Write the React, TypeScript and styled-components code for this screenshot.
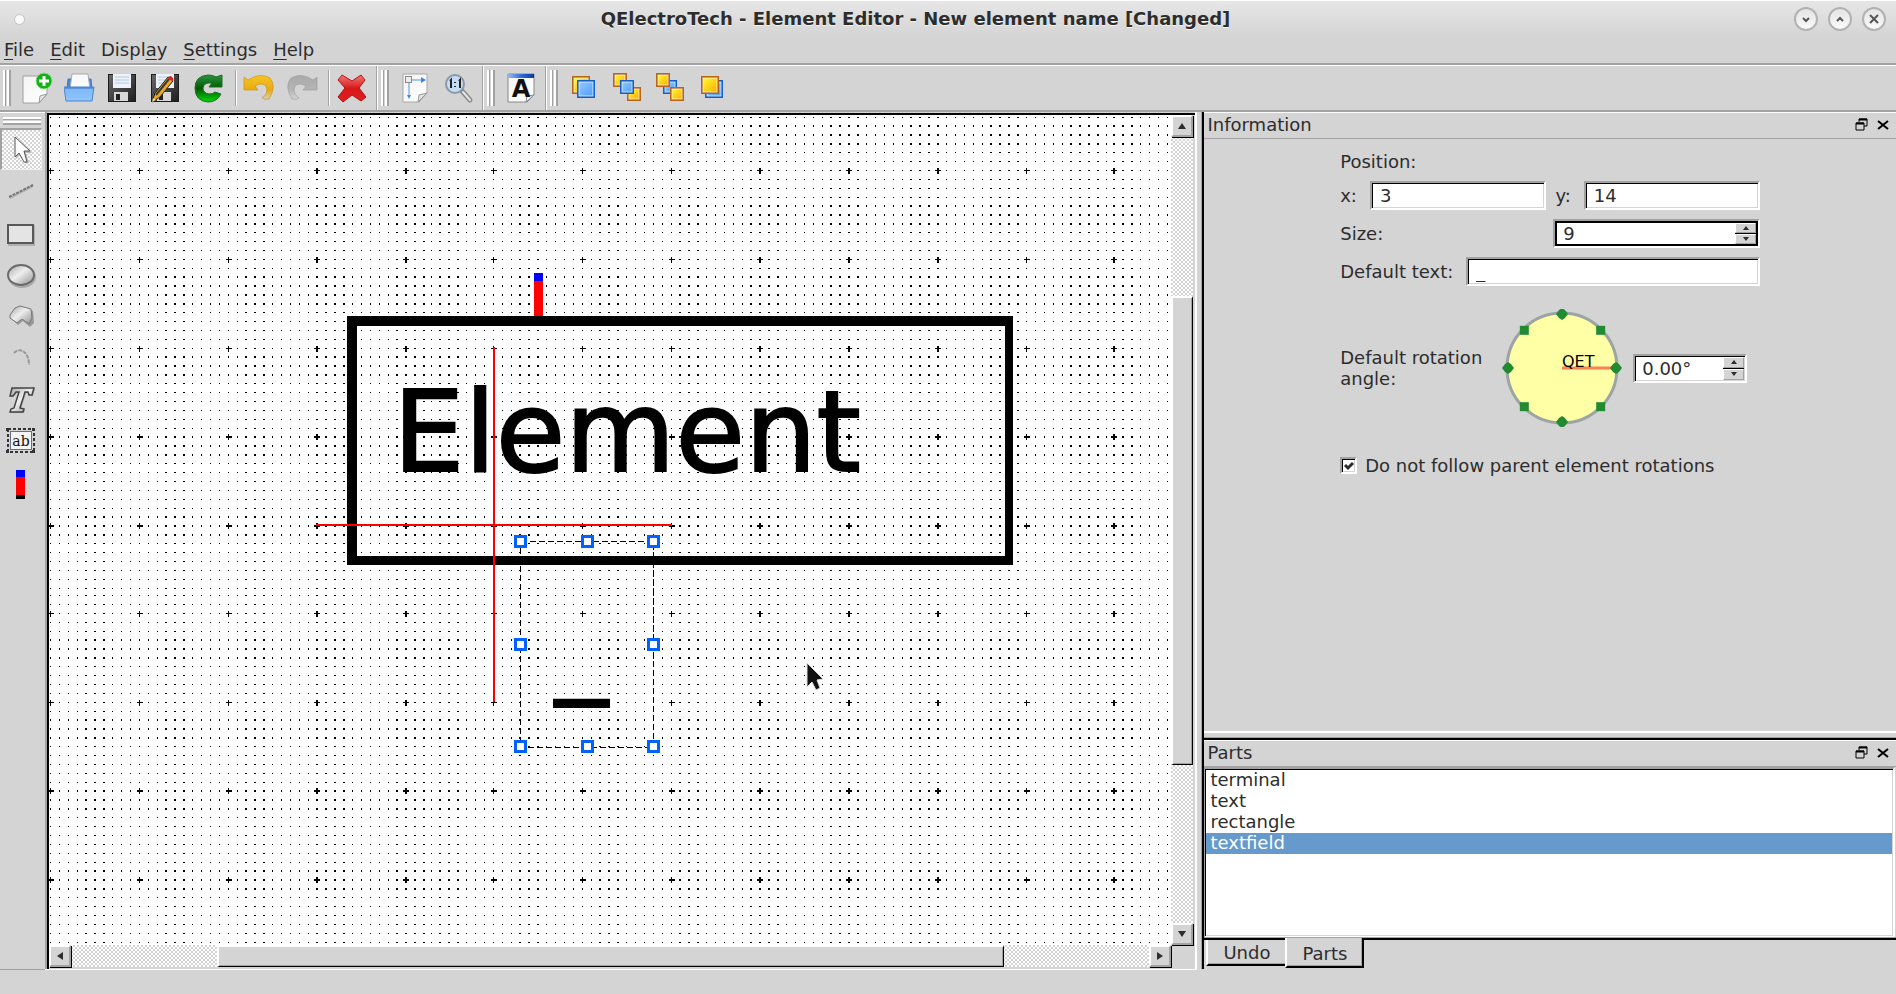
import React from "react";
import styled, { createGlobalStyle, css } from "styled-components";

const FACE = "#d4d4d4";
const SHADE = "#a2a2a2";
const INK = "#2d2d2d";

const GlobalStyle = createGlobalStyle`
  * { box-sizing: border-box; }
  body { margin: 0; background: ${FACE}; }
  button, input { font: inherit; color: inherit; }
`;

const raised = css`
  border-style: solid;
  border-width: 2px;
  border-color: #fff ${SHADE} ${SHADE} #fff;
`;

const stipple = css`
  background: repeating-conic-gradient(#fff 0 25%, ${FACE} 0 50%) 0 0 / 4px 4px;
`;

const Window = styled.div`
  display: flex;
  flex-direction: column;
  height: 100vh;
  min-height: 700px;
  overflow: hidden;
  background: ${FACE};
  color: ${INK};
  font: 18px/21px "DejaVu Sans", sans-serif;
`;

const TitleBar = styled.header`
  display: flex;
  align-items: center;
  height: 37px;
  padding: 0 10px 0 14px;
  border-top: 1px solid #fff;
  background: linear-gradient(#e6e6e6, ${FACE});
`;

const TitleButtons = styled.div`
  flex: none;
  display: flex;
  gap: 10px;
`;

const StickyDot = styled.button`
  width: 11px;
  height: 11px;
  padding: 0;
  border: 1px solid #c2c2c2;
  border-radius: 50%;
  background: #fafafa;
`;

const Title = styled.h1`
  flex: 1;
  margin: 0;
  padding-left: 12px;
  text-align: center;
  font-size: 18px;
  line-height: 24px;
  font-weight: bold;
  white-space: nowrap;
  text-shadow: 0 1px 0 #f4f4f4;
`;

const WindowButton = styled.button`
  display: flex;
  align-items: center;
  justify-content: center;
  width: 24px;
  height: 24px;
  padding: 0;
  border: 2px solid #b2b2b2;
  border-radius: 50%;
  background: linear-gradient(#e4e4e4, #fafafa);
`;

const MenuBar = styled.nav`
  display: flex;
  align-items: flex-start;
  gap: 16px;
  height: 28px;
  padding: 2px 4px 0;
  border-bottom: 2px solid ${SHADE};
`;

const MenuItem = styled.button`
  padding: 0;
  border: 0;
  background: none;
  line-height: 21px;
  u {
    text-decoration-thickness: 1px;
    text-underline-offset: 3px;
  }
`;

const ToolRow = styled.div`
  display: flex;
  height: 47px;
  border-top: 1px solid #fff;
  border-bottom: 2px solid ${SHADE};
`;

const ToolGroup = styled.div<{ $last?: boolean }>`
  display: flex;
  align-items: center;
  gap: 4px;
  padding: 0 3px;
  ${(p) =>
    !p.$last &&
    css`
      border-right: 1px solid ${SHADE};
      box-shadow: 1px 0 0 #fff;
      margin-right: 1px;
    `}
`;

const Grip = styled.span<{ $flat?: boolean }>`
  flex: none;
  width: ${(p) => (p.$flat ? "38px" : "8px")};
  height: ${(p) => (p.$flat ? "8px" : "36px")};
  background: linear-gradient(
    ${(p) => (p.$flat ? "180deg" : "90deg")},
    #fff 0 2px, ${SHADE} 2px 3px, ${FACE} 3px 4px, #fff 4px 6px, ${SHADE} 6px 8px
  );
`;

const Tools = styled.div`
  display: flex;
  align-items: center;
`;

const ToolButton = styled.button`
  display: flex;
  align-items: center;
  justify-content: center;
  width: 43px;
  height: 42px;
  padding: 0;
  border: 0;
  background: none;
  svg { display: block; }
`;

const Separator = styled.span`
  width: 2px;
  height: 36px;
  margin: 0 0 0 5px;
  border-left: 1px solid ${SHADE};
  border-right: 1px solid #fff;
`;

const Workspace = styled.main`
  flex: 1;
  display: flex;
  min-height: 0;
`;

const PartTools = styled.div`
  flex: none;
  display: flex;
  flex-direction: column;
  width: 45px;
  padding-top: 4px;
  border-top: 1px solid #fff;
  border-bottom: 1px solid ${SHADE};
  ${Grip} { margin: 0 3px 3px; }
`;

const PartButton = styled(ToolButton)<{ $on?: boolean }>`
  width: 42px;
  ${(p) =>
    p.$on &&
    css`
      ${stipple}
      border: 2px solid;
      border-width: 2px 1px 1px 2px;
      border-color: ${SHADE} #eee #eee ${SHADE};
    `}
`;

const CanvasFrame = styled.section`
  flex: 1;
  display: grid;
  grid-template-columns: minmax(0, 1fr) 22px;
  grid-template-rows: minmax(0, 1fr) 22px;
  min-width: 0;
  padding: 3px 2px 2px 4px;
  border-right: 2px solid #fff;
  border-bottom: 1px solid #fff;
  box-shadow: inset 2px 0 0 ${SHADE}, inset 0 1px 0 ${FACE}, inset 4px 3px 0 #000;
`;

const Scene = styled.svg`
  display: block;
  width: 100%;
  height: 100%;
  background: #fff;
`;

const ScrollBar = styled.div<{ $vertical?: boolean }>`
  display: flex;
  flex-direction: ${(p) => (p.$vertical ? "column" : "row")};
  ${stipple}
`;

const ScrollArrow = styled.button`
  flex: none;
  display: flex;
  align-items: center;
  justify-content: center;
  width: 22px;
  height: 22px;
  padding: 0;
  ${raised}
  background: ${FACE};
  box-shadow: 1px 1px 0 #000;
`;

const Track = styled.span<{ $grow: number }>`
  flex: ${(p) => p.$grow} 1 0;
`;

const Thumb = styled.span<{ $grow: number }>`
  flex: ${(p) => p.$grow} 1 0;
  border: solid;
  border-width: 2px 1px 1px 2px;
  border-color: #fff #000 #000 #fff;
  background: ${FACE};
  box-shadow: inset -1px -1px 0 ${SHADE};
`;

const Docks = styled.aside`
  flex: 0 0 calc(36% + 16px);
  display: flex;
  flex-direction: column;
  min-width: 480px;
  margin-bottom: 1px;
  padding-left: 5px;
`;

const DockArea = styled.div`
  flex: 1;
  display: flex;
  flex-direction: column;
  min-height: 0;
  border-left: 2px solid #000;
  box-shadow: -1px 0 0 ${SHADE};
`;

const DockTitle = styled.header`
  flex: none;
  display: flex;
  align-items: center;
  gap: 9px;
  height: 27px;
  padding: 0 7px 2px 3px;
  border-top: 1px solid #fff;
  border-bottom: 1px solid ${SHADE};
`;

const DockName = styled.h2`
  flex: 1;
  margin: 0;
  font-size: 18px;
  font-weight: normal;
`;

const DockButton = styled.button`
  display: flex;
  padding: 0;
  border: 0;
  background: none;
`;

const InfoBody = styled.form`
  flex: 1;
  display: flex;
  flex-direction: column;
  gap: 9px;
  width: 100%;
  max-width: 420px;
  min-height: 0;
  margin: 0 auto;
  padding-top: 12px;
`;

const FormHeading = styled.h3`
  margin: 0;
  font-size: 18px;
  font-weight: normal;
  line-height: 21px;
`;

const FormRow = styled.div<{ $tall?: boolean }>`
  display: flex;
  align-items: center;
  justify-content: space-between;
  gap: 9px;
  min-height: 29px;
  ${(p) => p.$tall && css`padding: 14px 13px 14px 0;`}
`;

const Label = styled.label`
  flex: none;
`;

const RotationLabel = styled(Label)`
  width: 150px;
`;

const sunken = css`
  border-style: solid;
  border-width: 2px;
  border-color: ${SHADE} #fff #fff ${SHADE};
  background: #fff;
  box-shadow: inset 1px 1px 0 #000, inset -1px -1px 0 ${FACE};
`;

const TextBox = styled.input`
  flex: 1;
  min-width: 0;
  height: 29px;
  margin-left: 4px;
  padding: 1px 8px;
  ${sunken}
  outline: 0;
`;

const SpinBox = styled.div<{ $wide?: boolean }>`
  display: flex;
  width: ${(p) => (p.$wide ? "207px" : "114px")};
  height: 29px;
  padding: ${(p) => (p.$wide ? "2px" : "1px")};
  ${sunken}
  ${(p) => p.$wide && css`box-shadow: inset 0 0 0 2px #000;`}
`;

const SpinInput = styled.input`
  flex: 1;
  min-width: 0;
  padding: 0 6px;
  border: 0;
  outline: 0;
  background: #fff;
`;

const SpinButtons = styled.div`
  display: grid;
  grid-template-rows: 1fr 1fr;
  gap: 1px;
  width: 21px;
  background: #000;
`;

const SpinButton = styled.button`
  display: flex;
  align-items: center;
  justify-content: center;
  min-height: 0;
  padding: 0;
  border: 1px solid;
  border-color: #fff ${SHADE} ${SHADE} #fff;
  background: ${FACE};
`;

const CheckRow = styled.label`
  display: flex;
  align-items: center;
  gap: 8px;
  padding-top: 5px;
`;

const CheckBox = styled.input`
  appearance: none;
  width: 17px;
  height: 17px;
  margin: 0;
  ${sunken}
`;

const CheckHolder = styled.span`
  display: grid;
  > * { grid-area: 1 / 1; }
  svg { pointer-events: none; }
  input:not(:checked) + svg { visibility: hidden; }
`;

const Splitter = styled.div`
  flex: none;
  height: 9px;
  border-top: 2px solid #fff;
  border-bottom: 2px solid #000;
  box-shadow: inset 0 -1px 0 ${SHADE};
`;

const PartsDock = styled.section`
  flex: 0 0 198px;
  display: flex;
  flex-direction: column;
`;

const PartsList = styled.ul`
  flex: 1;
  margin: 0 1px 0 0;
  padding: 1px 1px 0;
  list-style: none;
  ${sunken}
  border-left-width: 1px;
`;

const PartRow = styled.li<{ $on?: boolean }>`
  height: 21px;
  padding-left: 4px;
  line-height: 20px;
  background: ${(p) => (p.$on ? "#6699cc" : "transparent")};
  color: ${(p) => (p.$on ? "#fff" : INK)};
`;

const TabBar = styled.div`
  flex: none;
  display: flex;
  align-items: flex-start;
  height: 31px;
  padding-left: 2px;
  border-top: 2px solid #000;
  box-shadow: 0 -1px 0 ${SHADE};
`;

const Tab = styled.button<{ $on?: boolean }>`
  width: 79px;
  height: ${(p) => (p.$on ? "30px" : "26px")};
  margin-top: ${(p) => (p.$on ? "-2px" : "0")};
  padding: ${(p) => (p.$on ? "2px 0 0" : "0")};
  border: 0;
  border-left: 2px solid #fff;
  border-bottom: 2px solid #000;
  border-right: ${(p) => (p.$on ? "2px solid #000" : "0")};
  background: ${FACE};
  box-shadow: inset ${(p) => (p.$on ? "-1px" : "0")} -1px 0 ${SHADE};
`;

const StatusBar = styled.footer`
  height: 24px;
`;

/* ---------- icons ---------- */

const Defs = () => (
  <svg width="0" height="0" aria-hidden="true">
    <defs>
      <linearGradient id="paper" x1="0" y1="0" x2="1" y2="1"><stop stopColor="#f4f4f4" /><stop offset="1" stopColor="#fff" /></linearGradient>
      <linearGradient id="blue" x1="0" y1="0" x2="0" y2="1"><stop stopColor="#7db8f5" /><stop offset="1" stopColor="#8fc4ff" /></linearGradient>
      <linearGradient id="sky" x1="0" y1="0" x2="1" y2="1"><stop stopColor="#9accff" /><stop offset="1" stopColor="#4a9dff" /></linearGradient>
      <linearGradient id="sun" x1="0" y1="0" x2="1" y2="1"><stop stopColor="#ffff30" /><stop offset="1" stopColor="#fba800" /></linearGradient>
      <linearGradient id="disk" x1="0" y1="0" x2="1" y2="1"><stop stopColor="#6a6a6a" /><stop offset="1" stopColor="#1e1e1e" /></linearGradient>
      <linearGradient id="green" x1="0" y1="0" x2="0" y2="1"><stop stopColor="#2c9440" /><stop offset=".5" stopColor="#005a00" /><stop offset="1" stopColor="#0ad80a" /></linearGradient>
      <linearGradient id="gold" x1="0" y1="0" x2="0" y2="1"><stop stopColor="#f5c526" /><stop offset=".6" stopColor="#e8ab10" /><stop offset="1" stopColor="#e8ab10" stopOpacity=".1" /></linearGradient>
      <linearGradient id="silver" x1="0" y1="0" x2="0" y2="1"><stop stopColor="#aaa" /><stop offset=".6" stopColor="#b4b4b4" /><stop offset="1" stopColor="#bbb" stopOpacity=".1" /></linearGradient>
      <linearGradient id="red" x1="0" y1="0" x2="0" y2="1"><stop stopColor="#f07878" /><stop offset=".5" stopColor="#d81818" /><stop offset="1" stopColor="#e02020" /></linearGradient>
      <linearGradient id="steel" x1="0" y1="0" x2="1" y2="1"><stop stopColor="#a8a8a8" /><stop offset=".45" stopColor="#eee" /><stop offset="1" stopColor="#909090" /></linearGradient>
      <linearGradient id="caption" x1="0" y1="0" x2="1" y2="0"><stop stopColor="#9bb8e8" /><stop offset=".5" stopColor="#2f6fdc" /><stop offset="1" stopColor="#0a3a9a" /></linearGradient>
    </defs>
  </svg>
);

type IconProps = { children: React.ReactNode };
const Icon = ({ children }: IconProps) => (
  <svg width="32" height="32" viewBox="0 0 32 32" aria-hidden="true">{children}</svg>
);

const NewIcon = () => (
  <Icon>
    <path d="M2 4H26V22L18 31H2Z" fill="url(#paper)" stroke="#a0a0a0" />
    <path d="M18 31L19 24L26 22Z" fill="#e8e8e8" stroke="#999" />
    <circle cx="23" cy="9" r="8" fill="#12b012" stroke="#8fdc8f" />
    <path d="M23 4V14M18 9H28" stroke="#fff" strokeWidth="3" />
  </Icon>
);
const OpenIcon = () => (
  <Icon>
    <path d="M4 7H27L28 17H3Z" fill="#4b87d6" stroke="#3f78c4" />
    <path d="M8 2H24L26 17H6Z" fill="#fafafa" stroke="#aaa" />
    <path d="M0 15H30L28 29H2Z" fill="url(#blue)" stroke="#4a84cc" />
    <path d="M1 16H29" stroke="#3a73c0" />
  </Icon>
);
const Floppy = () => (
  <>
    <rect x="1.500" y="2.500" width="27" height="27" fill="url(#disk)" stroke="#1c1c1c" />
    <rect x="6" y="2" width="18" height="14" fill="#eef3fa" />
    <path d="M8 5H22M8 8H22M8 11H22" stroke="#b4c8e0" />
    <rect x="7" y="20" width="14" height="9" fill="#d8d8d8" />
    <rect x="9" y="22" width="4" height="6" fill="#222" />
  </>
);
const SaveIcon = () => (<Icon><Floppy /></Icon>);
const SaveAsIcon = () => (
  <Icon>
    <Floppy />
    <path d="M2 30L5 21L18 5L23 9L10 25Z" fill="#e8a820" stroke="#222" />
    <path d="M6 23L19 7" stroke="#3a3a3a" strokeWidth="2" />
    <path d="M17 6L20 4Q24 5 23 9Z" fill="#dd1c1c" />
    <path d="M2 30L3 26L6 28Z" fill="#f2d8a0" />
  </Icon>
);
const ReloadIcon = () => (
  <Icon>
    <path d="M23 5Q20 3 15 3Q2 4 2 16Q2 29 15 30Q24 30 28 22L22 20Q20 22 16 22Q10 21 10 16Q11 11 16 11L19 11L16 15H29V3Z" fill="url(#green)" stroke="#1d6e25" />
  </Icon>
);
const BackShape = "M1 5L5 8Q17 0 27 6Q34 14 26 27Q21 28 19 26Q26 21 23 14Q19 10 12 14L15 18H1Z";
const UndoIcon = () => (<Icon><path d={BackShape} fill="url(#gold)" stroke="#cf9414" strokeOpacity=".7" /></Icon>);
const RedoIcon = () => (<Icon><path d={BackShape} transform="matrix(-1 0 0 1 32 0)" fill="url(#silver)" stroke="#999" strokeOpacity=".6" /></Icon>);
const DeleteIcon = () => (
  <Icon>
    <path d="M6 3L16 9L25 3L29 8L23 16L30 25L25 29L16 23L7 30L2 25L9 16L2 8Z" fill="url(#red)" stroke="#b51212" strokeLinejoin="round" />
  </Icon>
);
const DiagramIcon = () => (
  <Icon>
    <path d="M4 2H28V21L20 30H4Z" fill="url(#paper)" stroke="#a8a8a8" />
    <path d="M19 30L20 23L28 21Z" fill="#e2e2e2" stroke="#999" />
    <rect x="6.500" y="4.500" width="6" height="6" fill="#eee" stroke="#888" />
    <path d="M13 8H24M10 11V25" stroke="#4f96ee" />
    <path d="M22 5L27 8L22 11ZM8 23H12L10 27Z" fill="#3c88ea" />
  </Icon>
);
const ZoomIcon = () => (
  <Icon>
    <path d="M20 19L28 28" stroke="#8a8a8a" strokeWidth="5" strokeLinecap="round" />
    <path d="M21 20L28 28" stroke="#e4e4e4" strokeWidth="2" strokeLinecap="round" />
    <circle cx="13" cy="12" r="9" fill="#c4dcf4" stroke="#8a98a8" strokeWidth="2" />
    <path d="M8 9L9 8V16M17 9L18 8V16M13 10V11M13 14V15" stroke="#222" strokeWidth="2" fill="none" />
  </Icon>
);
const RichTextIcon = () => (
  <Icon>
    <path d="M3 2H29V23L22 30H3Z" fill="url(#paper)" stroke="#888" />
    <path d="M21 30L22 24L29 23Z" fill="#fff" stroke="#888" />
    <rect x="3" y="2" width="26" height="4" fill="url(#caption)" />
    <text x="16" y="25" textAnchor="middle" fontFamily="DejaVu Sans, sans-serif" fontWeight="bold" fontSize="24" fill="#111">A</text>
  </Icon>
);
type SquareProps = { x: number; y: number; s: number };
const SunSquare = ({ x, y, s }: SquareProps) => (
  <>
    <rect x={x} y={y} width={s} height={s} fill="url(#sun)" stroke="#b8641a" strokeWidth="2" />
    <rect x={x + 1} y={y + 1} width={s - 2} height={s - 2} fill="none" stroke="#fff" strokeOpacity=".7" />
  </>
);
const SkySquare = ({ x, y, s }: SquareProps) => (
  <>
    <rect x={x} y={y} width={s} height={s} fill="url(#sky)" stroke="#1260c8" strokeWidth="2" />
    <rect x={x + 1} y={y + 1} width={s - 2} height={s - 2} fill="none" stroke="#fff" strokeOpacity=".7" />
  </>
);
const FrontIcon = () => (<Icon><SunSquare x={5} y={5} s={16} /><SkySquare x={10} y={9} s={16} /></Icon>);
const RaiseIcon = () => (<Icon><SunSquare x={3} y={2} s={12} /><SunSquare x={17} y={16} s={12} /><SkySquare x={10} y={9} s={12} /></Icon>);
const LowerIcon = () => (<Icon><SkySquare x={10} y={9} s={12} /><SunSquare x={3} y={2} s={12} /><SunSquare x={17} y={16} s={12} /></Icon>);
const BackIcon = () => (<Icon><SkySquare x={9} y={9} s={16} /><SunSquare x={5} y={5} s={16} /></Icon>);

const PointerIcon = () => (
  <Icon>
    <path d="M9 3V24L14 19L18 28H22L19 18H25Z" fill="#bbb" transform="translate(1 1)" />
    <path d="M9 3V23L13 19L18 28H21L18 17H24Z" fill="#fff" stroke="#555" />
  </Icon>
);
const LineIcon = () => (<Icon><path d="M5 23L28 11" stroke="#b4b4b4" strokeWidth="2" /><path d="M4 22L28 10" stroke="#777" strokeWidth="2" strokeDasharray="3 1" /></Icon>);
const RectIcon = () => (
  <Icon>
    <rect x="3" y="8" width="27" height="21" fill="#b0b0b0" />
    <rect x="3" y="8" width="25" height="18" fill="#e4e4e4" stroke="#585858" strokeWidth="2" />
  </Icon>
);
const EllipseIcon = () => (<Icon><ellipse cx="17" cy="18" rx="14" ry="11" fill="#aaa" /><ellipse cx="16" cy="16" rx="13" ry="10" fill="url(#steel)" stroke="#6a6a6a" strokeWidth="2" /></Icon>);
const PolygonIcon = () => (
  <Icon>
    <path d="M6 14L11 7L15 5L27 9L28 21L24 25L17 19L12 23L6 17Z" fill="#999" transform="translate(1 1)" />
    <path d="M5 14L10 7L15 5L26 8L27 17L24 23L17 18L12 22L5 17Z" fill="url(#steel)" stroke="#777" />
  </Icon>
);
const ArcIcon = () => (<Icon><path d="M9 10Q14 5 19 9Q24 13 24 22" fill="none" stroke="#999" strokeWidth="2" strokeDasharray="4 1" /></Icon>);
const TextIcon = () => (
  <Icon>
    <path d="M8 4H30L28 11H25L24 8H21L16 24L20 25L19 28H6L7 25L10 24L15 8H12L8 12H5Z" fill="#aaa" />
    <path d="M7 3H29L27 10H24L23 7H20L15 23L19 24L18 27H5L6 24L9 23L14 7H11L8 11H5Z" fill="url(#steel)" stroke="#444" strokeWidth="1.500" />
  </Icon>
);
const FieldIcon = () => (
  <Icon>
    <rect x="3" y="2" width="26" height="23" fill="none" stroke="#333" strokeWidth="2" strokeDasharray="3 2" />
    <path d="M1 1H4V4H1ZM27 1H30V4H27ZM1 23H4V26H1ZM27 23H30V26H27Z" fill="#333" />
    <rect x="5.500" y="4.500" width="21" height="18" fill="#f4f4f4" stroke="#6a6a90" />
    <text x="16" y="19" textAnchor="middle" fontFamily="DejaVu Serif, serif" fontSize="14" fill="#111">ab</text>
  </Icon>
);
const TerminalIcon = () => (<Icon><path d="M11 1H20V8H11Z" fill="#00f" /><path d="M11 8H20V26H11Z" fill="red" /><path d="M11 26H20V30H11Z" fill="#000" /></Icon>);

const Triangle = ({ d }: { d: string }) => (<svg width="10" height="10" viewBox="0 0 10 10" aria-hidden="true"><path d={d} fill={INK} /></svg>);
const SpinMark = ({ down }: { down?: boolean }) => (<svg width="6" height="4" viewBox="0 0 6 4" aria-hidden="true"><path d={down ? "M0 0H6L3 4Z" : "M0 4H6L3 0Z"} fill={INK} /></svg>);
const Glyph = ({ d }: { d: string }) => (<svg width="12" height="12" viewBox="0 0 12 12" aria-hidden="true"><path d={d} fill="none" stroke="#555" strokeWidth="2" /></svg>);

/* ---------- drawing ---------- */

const ZOOM = 1896 / 1280;

/** Snaps a grid step to whole device pixels; `bold` is the share of steps drawn two pixels thick. */
const snap = (origin: number, step: number, bold: number): [number, number] => {
  const at = Math.round(origin + step * 5.987) * ZOOM;
  const start = Math.floor(at);
  return [start, at - start > 1 - bold ? 2 : 1];
};

const gridPath = () => {
  const parts: string[] = [];
  for (let j = -50; j < 120; j++) {
    const [y, h] = snap(354.6, j, 0.35);
    if (y < 115) continue;
    for (let i = -50; i < 220; i++) {
      const [x, w] = snap(333.4, i, 0.4);
      if (x < 49) continue;
      parts.push(`M${x} ${y}h${w}v${h}h-${w}z`);
      if (i % 10 === 0 && j % 10 === 0) {
        parts.push(`M${x - 2} ${y}h6v${h}h-6zM${x} ${y - 2}h${w}v6h-${w}z`);
      }
    }
  }
  return parts.join("");
};

const GRID = gridPath();
const HANDLES = [[514, 535], [581, 535], [647, 535], [514, 638], [647, 638], [514, 740], [581, 740], [647, 740]];

const Drawing = () => (
  <Scene aria-label="Element drawing">
    <g transform="translate(-49 -115)">
      <path d={GRID} fill="#000" shapeRendering="crispEdges" />
      <g shapeRendering="crispEdges">
        <path d="M347 316H1013V565H347ZM357 326V556H1005V326Z" fill="#000" fillRule="evenodd" />
        <path d="M534 281H543V316H534Z" fill="red" />
        <path d="M534 273H543V281H534Z" fill="#00f" />
      </g>
      <text x="393" y="471" fontFamily="DejaVu Sans, sans-serif" fontSize="113" fill="#000" stroke="#000" strokeWidth="2">Element</text>
      <text x="555" y="682" fontFamily="DejaVu Sans, sans-serif" fontSize="106" fill="#000" stroke="#000" strokeWidth="2">_</text>
      <g shapeRendering="crispEdges">
        <path d="M493 347H495V702H493ZM316 524H672V526H316Z" fill="red" />
        <path d="M520.500 541.500H653.500V747.500H520.500Z" fill="none" stroke="#000" strokeDasharray="6 3" />
        {HANDLES.map(([x, y]) => (
          <rect key={`${x}-${y}`} x={x + 1.5} y={y + 1.5} width="10" height="10" fill="#fff" stroke="#0062ff" strokeWidth="3" />
        ))}
      </g>
      <path d="M807 663V687L812 682L816 690L820 688L817 680L823 679Z" fill="#111" stroke="#ddd" />
    </g>
  </Scene>
);

const compass = [0, 45, 90, 135, 180, 225, 270, 315];

const RotationDial = () => (
  <svg width="120" height="118" viewBox="0 0 120 118" role="img" aria-label="Rotation dial">
    <circle cx="60" cy="59" r="55" fill="#ffffa6" stroke="#9ca4a4" strokeWidth="3" />
    <path d="M60 59H114" stroke="#ff7f50" strokeWidth="3" />
    <text x="60" y="58" fontFamily="DejaVu Sans, sans-serif" fontSize="16" fill="#000">QET</text>
    {compass.map((a) => {
      const cx = 60 + 54 * Math.cos((a * Math.PI) / 180);
      const cy = 59 + 54 * Math.sin((a * Math.PI) / 180);
      return a % 90 ? (
        <rect key={a} x={cx - 4} y={cy - 4} width="9" height="9" fill="#228b32" />
      ) : (
        <path key={a} d={`M${cx - 6} ${cy}L${cx - 3} ${cy - 4}L${cx} ${cy - 6}L${cx + 3} ${cy - 4}L${cx + 6} ${cy}L${cx + 3} ${cy + 4}L${cx} ${cy + 6}L${cx - 3} ${cy + 4}Z`} fill="#228b32" />
      );
    })}
  </svg>
);

const DockControls = () => (
  <>
    <DockButton type="button" aria-label="Float">
      <svg width="13" height="13" viewBox="0 0 13 13"><path d="M4 4V1H12V8H9M1 5H9V12H1Z" fill="none" stroke="#000" /><path d="M4 1.500H12M1 5.500H9" stroke="#000" strokeWidth="2" /></svg>
    </DockButton>
    <DockButton type="button" aria-label="Close">
      <svg width="12" height="12" viewBox="0 0 12 12"><path d="M1 2L11 10M11 2L1 10" stroke="#000" strokeWidth="2" /></svg>
    </DockButton>
  </>
);

const Spin = () => (
  <SpinButtons>
    <SpinButton type="button" aria-label="Increase"><SpinMark /></SpinButton>
    <SpinButton type="button" aria-label="Decrease"><SpinMark down /></SpinButton>
  </SpinButtons>
);

const editTools = [
  { label: "New", icon: <NewIcon /> },
  { label: "Open", icon: <OpenIcon /> },
  { label: "Save", icon: <SaveIcon /> },
  { label: "Save as", icon: <SaveAsIcon /> },
  { label: "Reload", icon: <ReloadIcon /> },
];
const depthTools = [
  { label: "Bring to front", icon: <FrontIcon /> },
  { label: "Raise", icon: <RaiseIcon /> },
  { label: "Lower", icon: <LowerIcon /> },
  { label: "Send to back", icon: <BackIcon /> },
];
const partTools = [
  { label: "Select", icon: <PointerIcon /> },
  { label: "Line", icon: <LineIcon /> },
  { label: "Rectangle", icon: <RectIcon /> },
  { label: "Ellipse", icon: <EllipseIcon /> },
  { label: "Polygon", icon: <PolygonIcon /> },
  { label: "Arc", icon: <ArcIcon /> },
  { label: "Text", icon: <TextIcon /> },
  { label: "Text field", icon: <FieldIcon /> },
  { label: "Terminal", icon: <TerminalIcon /> },
];

const Tool = ({ label, icon }: { label: string; icon: React.ReactNode }) => (
  <ToolButton type="button" aria-label={label}>{icon}</ToolButton>
);

export default function App() {
  return (
    <Window>
      <GlobalStyle />
      <TitleBar>
        <TitleButtons><StickyDot type="button" aria-label="On all desktops" /></TitleButtons>
        <Title>QElectroTech - Element Editor - New element name [Changed]</Title>
        <TitleButtons>
          <WindowButton type="button" aria-label="Minimize"><Glyph d="M3 5L6 8L9 5" /></WindowButton>
          <WindowButton type="button" aria-label="Maximize"><Glyph d="M3 8L6 5L9 8" /></WindowButton>
          <WindowButton type="button" aria-label="Close"><Glyph d="M2 2L10 10M10 2L2 10" /></WindowButton>
        </TitleButtons>
      </TitleBar>
      <MenuBar>
        <MenuItem type="button"><u>F</u>ile</MenuItem>
        <MenuItem type="button"><u>E</u>dit</MenuItem>
        <MenuItem type="button">Displ<u>a</u>y</MenuItem>
        <MenuItem type="button"><u>S</u>ettings</MenuItem>
        <MenuItem type="button"><u>H</u>elp</MenuItem>
      </MenuBar>
      <ToolRow>
        <ToolGroup>
          <Grip />
          <Tools>
            {editTools.map((t) => <Tool key={t.label} {...t} />)}
            <Separator />
            <Tool label="Undo" icon={<UndoIcon />} />
            <Tool label="Redo" icon={<RedoIcon />} />
            <Separator />
            <Tool label="Delete" icon={<DeleteIcon />} />
          </Tools>
        </ToolGroup>
        <ToolGroup>
          <Grip />
          <Tools>
            <Tool label="Fit view" icon={<DiagramIcon />} />
            <Tool label="Reset zoom" icon={<ZoomIcon />} />
          </Tools>
        </ToolGroup>
        <ToolGroup>
          <Grip />
          <Tools><Tool label="Edit names" icon={<RichTextIcon />} /></Tools>
        </ToolGroup>
        <ToolGroup $last>
          <Grip />
          <Tools>{depthTools.map((t) => <Tool key={t.label} {...t} />)}</Tools>
        </ToolGroup>
      </ToolRow>
      <Workspace>
        <PartTools>
          <Grip $flat />
          {partTools.map((t, i) => (
            <PartButton key={t.label} type="button" aria-label={t.label} $on={i === 0}>{t.icon}</PartButton>
          ))}
        </PartTools>
        <CanvasFrame>
          <Drawing />
          <ScrollBar $vertical>
            <ScrollArrow type="button" aria-label="Scroll up"><Triangle d="M1 8H9L5 2Z" /></ScrollArrow>
            <Track $grow={160} />
            <Thumb $grow={467} />
            <Track $grow={159} />
            <ScrollArrow type="button" aria-label="Scroll down"><Triangle d="M1 2H9L5 8Z" /></ScrollArrow>
          </ScrollBar>
          <ScrollBar>
            <ScrollArrow type="button" aria-label="Scroll left"><Triangle d="M8 1V9L2 5Z" /></ScrollArrow>
            <Track $grow={146} />
            <Thumb $grow={786} />
            <Track $grow={146} />
            <ScrollArrow type="button" aria-label="Scroll right"><Triangle d="M2 1V9L8 5Z" /></ScrollArrow>
          </ScrollBar>
        </CanvasFrame>
        <Docks>
          <DockArea>
            <DockTitle><DockName>Information</DockName><DockControls /></DockTitle>
            <InfoBody>
              <FormHeading>Position:</FormHeading>
              <FormRow>
                <Label htmlFor="pos-x">x:</Label>
                <TextBox id="pos-x" defaultValue="3" />
                <Label htmlFor="pos-y">y:</Label>
                <TextBox id="pos-y" defaultValue="14" />
              </FormRow>
              <FormRow>
                <Label htmlFor="size">Size:</Label>
                <SpinBox $wide><SpinInput id="size" defaultValue="9" /><Spin /></SpinBox>
              </FormRow>
              <FormRow>
                <Label htmlFor="default-text">Default text:</Label>
                <TextBox id="default-text" defaultValue="_" />
              </FormRow>
              <FormRow $tall>
                <RotationLabel htmlFor="angle">Default rotation angle:</RotationLabel>
                <RotationDial />
                <SpinBox><SpinInput id="angle" defaultValue="0.00°" /><Spin /></SpinBox>
              </FormRow>
              <CheckRow>
                <CheckHolder>
                  <CheckBox type="checkbox" defaultChecked />
                  <svg width="17" height="17" viewBox="0 0 17 17" aria-hidden="true"><path d="M5 8L8 11L13 6" fill="none" stroke={INK} strokeWidth="3" /></svg>
                </CheckHolder>
                Do not follow parent element rotations
              </CheckRow>
            </InfoBody>
            <Splitter />
            <PartsDock>
              <DockTitle><DockName>Parts</DockName><DockControls /></DockTitle>
              <PartsList>
                <PartRow>terminal</PartRow>
                <PartRow>text</PartRow>
                <PartRow>rectangle</PartRow>
                <PartRow $on>textfield</PartRow>
              </PartsList>
            </PartsDock>
            <TabBar>
              <Tab type="button">Undo</Tab>
              <Tab type="button" $on>Parts</Tab>
            </TabBar>
          </DockArea>
        </Docks>
      </Workspace>
      <StatusBar />
      <Defs />
    </Window>
  );
}
